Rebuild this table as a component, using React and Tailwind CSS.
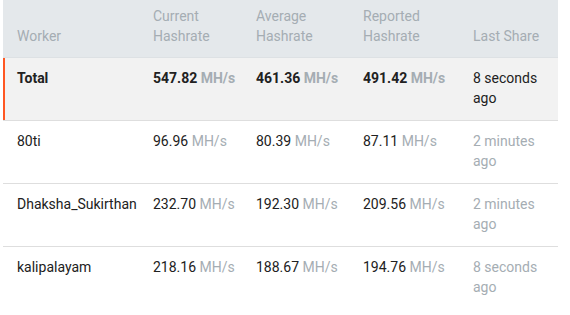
const rows = [
  { name: '80ti', current: '96.96', average: '80.39', reported: '87.11', last: '2 minutes ago' },
  { name: 'Dhaksha_Sukirthan', current: '232.70', average: '192.30', reported: '209.56', last: '2 minutes ago' },
  { name: 'kalipalayam', current: '218.16', average: '188.67', reported: '194.76', last: '8 seconds ago' },
];

function Rate({ value, bold }) {
  return (
    <span className={`whitespace-nowrap ${bold ? 'font-bold' : ''}`}>
      <span className="text-[#212121]">{value}</span>{' '}
      <span className="text-[#a5adb3]">MH/s</span>
    </span>
  );
}

export default function App() {
  return (
    <div className="bg-white w-[570px] h-[315px] overflow-hidden font-['Roboto',sans-serif] text-[14px] leading-5 text-[#212121]">
      <table className="ml-[3px] w-[555px] table-fixed border-collapse text-left">
        <colgroup>
          <col className="w-[138px]" />
          <col className="w-[103px]" />
          <col className="w-[107px]" />
          <col className="w-[110px]" />
          <col className="w-[97px]" />
        </colgroup>
        <thead>
          <tr className="bg-[#e4e8eb] text-[#a5adb3] border-b border-[#dde1e4]">
            <th className="font-normal align-bottom pl-[14px] pr-3 pt-1.5 pb-[11px]">Worker</th>
            <th className="font-normal align-bottom pl-3 pr-3 pt-1.5 pb-[11px]">Current Hashrate</th>
            <th className="font-normal align-bottom pl-3 pr-3 pt-1.5 pb-[11px]">Average Hashrate</th>
            <th className="font-normal align-bottom pl-3 pr-3 pt-1.5 pb-[11px]">Reported Hashrate</th>
            <th className="font-normal align-bottom pl-3 pr-3 pt-1.5 pb-[11px]">Last Share</th>
          </tr>
        </thead>
        <tbody>
          <tr className="bg-[#f2f2f2] border-b border-[#dedede] align-top">
            <td className="pl-[14px] pr-3 pt-[10px] pb-[12px] font-bold shadow-[inset_2px_0_0_#ff5722]">Total</td>
            <td className="px-3 pt-[10px] pb-[12px]"><Rate value="547.82" bold /></td>
            <td className="px-3 pt-[10px] pb-[12px]"><Rate value="461.36" bold /></td>
            <td className="px-3 pt-[10px] pb-[12px]"><Rate value="491.42" bold /></td>
            <td className="px-3 pt-[10px] pb-[12px]">8 seconds ago</td>
          </tr>
          {rows.map((r, i) => (
            <tr key={r.name} className={`align-top ${i < rows.length - 1 ? 'border-b border-[#dedede]' : ''}`}>
              <td className="pl-[14px] pr-1 pt-[10px] pb-[12px] whitespace-nowrap">{r.name}</td>
              <td className="px-3 pt-[10px] pb-[12px]"><Rate value={r.current} /></td>
              <td className="px-3 pt-[10px] pb-[12px]"><Rate value={r.average} /></td>
              <td className="px-3 pt-[10px] pb-[12px]"><Rate value={r.reported} /></td>
              <td className="px-3 pt-[10px] pb-[12px] text-[#a5adb3]">{r.last}</td>
            </tr>
          ))}
        </tbody>
      </table>
    </div>
  );
}
